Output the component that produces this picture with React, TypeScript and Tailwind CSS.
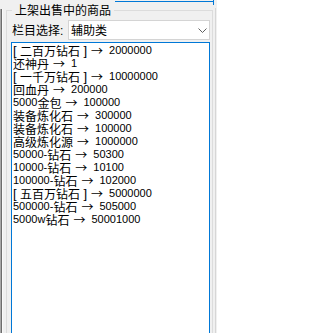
import { Fragment } from "react";

interface Item {
  name: string;
  value: string;
}

const items: Item[] = [
  { name: "[二百万钻石]", value: "2000000" },
  { name: "还神丹", value: "1" },
  { name: "[一千万钻石]", value: "10000000" },
  { name: "回血丹", value: "200000" },
  { name: "5000金包", value: "100000" },
  { name: "装备炼化石", value: "300000" },
  { name: "装备炼化石", value: "100000" },
  { name: "高级炼化源", value: "1000000" },
  { name: "50000-钻石", value: "50300" },
  { name: "10000-钻石", value: "10100" },
  { name: "100000-钻石", value: "102000" },
  { name: "[五百万钻石]", value: "5000000" },
  { name: "500000-钻石", value: "505000" },
  { name: "5000w钻石", value: "50001000" },
];

const cjk = "font-['Noto_Sans_CJK_SC',sans-serif] text-[12px]";
const latin = "font-['Liberation_Sans','Noto_Sans_CJK_SC',sans-serif] text-[11px]";
const cell = "inline-block align-top h-[13px] leading-[13px]";

// split a name into CJK runs, brackets and latin runs so each gets its own font size
const renderName = (name: string) => {
  const parts = name.split(/(\[|\]|[\u4e00-\u9fff]+)/).filter(Boolean);
  return parts.map((part, i) => {
    if (part === "[" || part === "]") {
      return (
        <span
          key={i}
          className={`${cell} w-[7px] font-['Liberation_Sans',sans-serif] text-[13px] ${
            part === "[" ? "text-left" : "text-right"
          }`}
        >
          {part}
        </span>
      );
    }
    if (/[\u4e00-\u9fff]/.test(part)) {
      return (
        <span key={i} className={`${cell} ${cjk}`}>
          {part}
        </span>
      );
    }
    return (
      <span key={i} className={`${cell} ${latin}`}>
        {part}
      </span>
    );
  });
};

const ListRow = ({ item }: { item: Item }) => (
  <div className="h-[13px] leading-[13px] whitespace-nowrap text-black">
    {renderName(item.name)}
    <span className={`${cell} w-[12px] ml-[4px] mr-[6px] ${cjk}`}>→</span>
    <span className={`${cell} ${latin}`}>{item.value}</span>
  </div>
);

const Chevron = () => (
  <svg width="9" height="5" viewBox="0 0 9 5" className="block">
    <path d="M0.5 0.5 L4.5 4.5 L8.5 0.5" fill="none" stroke="#606060" strokeWidth="1" />
  </svg>
);

const App = () => {
  return (
    <div className="w-[217px] h-[333px] overflow-hidden bg-[#f0f0f0]">
      {/* sliver of the control above */}
      <div className="ml-[115px] w-[99px] h-[2px] border-b border-r border-[#0078d7]" />

      <div className="flex">
        {/* edge of the panel on the left */}
        <div className="flex w-[6px]">
          <div className="w-px mt-[7px] h-[400px] bg-[#a8a8a8]" />
          <div className="w-px mt-[7px] h-[400px] bg-[#6d6d6d]" />
          <div className="w-px mt-[7px] h-[400px] bg-[#fafafa]" />
        </div>

        <fieldset className="w-[207px] border border-[#dcdcdc]">
          <legend className={`ml-[5px] px-[3px] leading-[16px] text-black ${cjk}`}>
            上架出售中的商品
          </legend>

          <div className="flex items-center mt-[2px] pl-[5px] pr-[2px]">
            <div className={`w-[56px] leading-[16px] text-black ${cjk}`}>
              栏目选择<span className="font-['Liberation_Sans',sans-serif]">:</span>
            </div>
            <div className="flex items-center justify-between w-[142px] h-[20px] border border-[#d4d4d4] bg-white pl-[2px] pr-[2px]">
              <span className={`leading-[16px] text-black ${cjk}`}>辅助类</span>
              <Chevron />
            </div>
          </div>

          <div className="ml-[4px] mr-[2px] mt-[2px] w-[199px] h-[300px] border border-[#0078d7] bg-white pt-[1px] pl-[1px]">
            {items.map((item, i) => (
              <Fragment key={i}>
                <ListRow item={item} />
              </Fragment>
            ))}
          </div>
        </fieldset>

        {/* edge on the right */}
        <div className="flex w-[4px]">
          <div className="w-px h-[3px] bg-[#0078d7]" />
          <div className="w-px" />
          <div className="w-px mt-[6px] h-[400px] bg-[#d6d6d6]" />
        </div>
      </div>
    </div>
  );
};

export default App;
